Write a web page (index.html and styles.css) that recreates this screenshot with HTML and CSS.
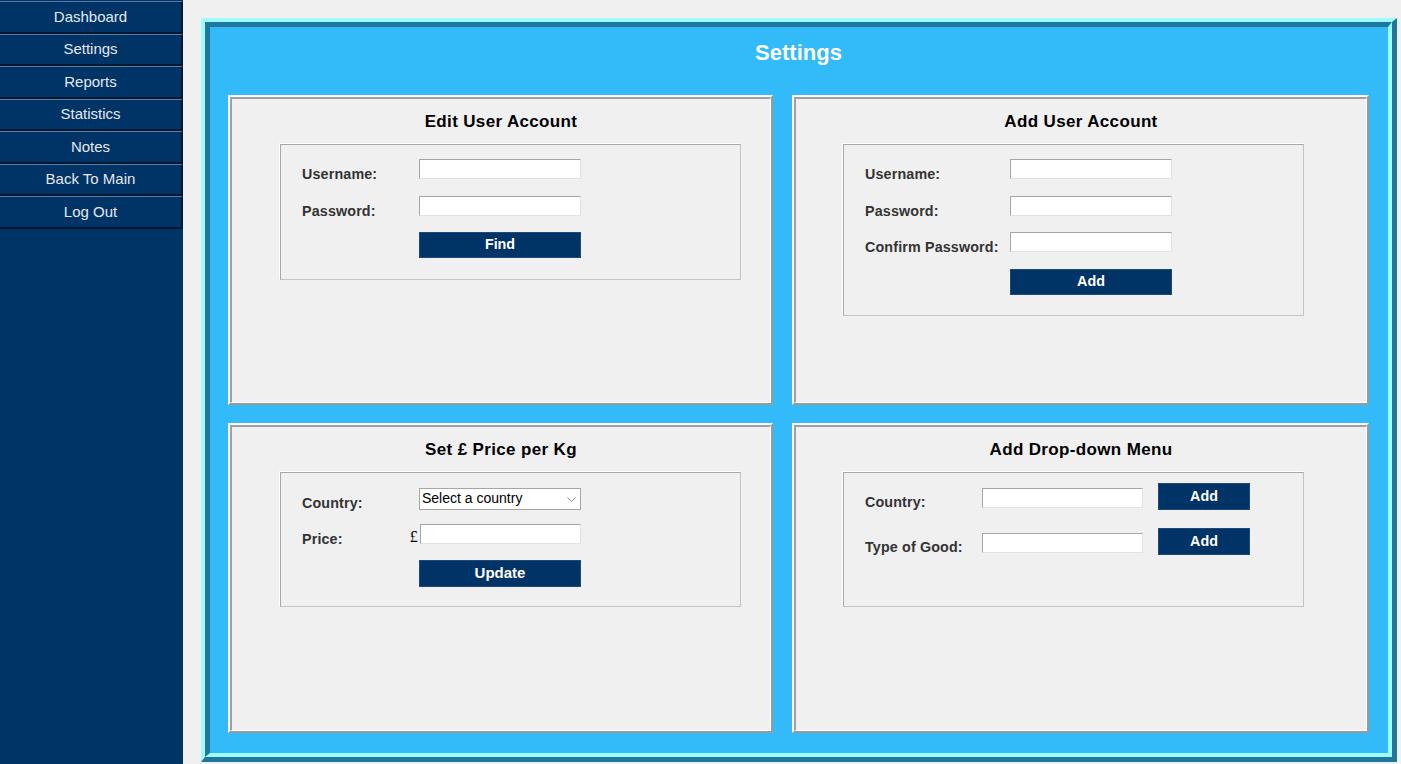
FILE: index.html
```html
<!DOCTYPE html>
<html lang="en">
<head>
<meta charset="utf-8">
<title>Settings</title>
<link rel="stylesheet" href="styles.css">
</head>
<body>
<nav class="sidebar">
  <div class="nav-btn">Dashboard</div>
  <div class="nav-btn">Settings</div>
  <div class="nav-btn">Reports</div>
  <div class="nav-btn">Statistics</div>
  <div class="nav-btn">Notes</div>
  <div class="nav-btn">Back To Main</div>
  <div class="nav-btn">Log Out</div>
</nav>
<main class="main">
  <div class="frame">
    <div class="frame-inner">
      <h1 class="page-title">Settings</h1>
      <div class="grid">
        <section class="card card-left">
          <div class="card-inner">
            <h2 class="card-title">Edit User Account</h2>
            <div class="box box-edit">
              <div class="form">
                <label class="lbl">Username:</label><input class="txt" type="text">
                <label class="lbl">Password:</label><input class="txt" type="password">
                <span></span><button class="btn">Find</button>
              </div>
            </div>
          </div>
        </section>
        <section class="card">
          <div class="card-inner">
            <h2 class="card-title">Add User Account</h2>
            <div class="box box-add">
              <div class="form form-wide">
                <label class="lbl">Username:</label><input class="txt" type="text">
                <label class="lbl">Password:</label><input class="txt" type="password">
                <label class="lbl">Confirm Password:</label><input class="txt" type="password">
                <span></span><button class="btn">Add</button>
              </div>
            </div>
          </div>
        </section>
        <section class="card card-left">
          <div class="card-inner">
            <h2 class="card-title">Set £ Price per Kg</h2>
            <div class="box box-price">
              <div class="form form-price">
                <label class="lbl">Country:</label>
                <div class="select-wrap">
                  <select class="sel"><option>Select a country</option></select>
                  <svg class="chev" width="9" height="6" viewBox="0 0 9 6"><polyline points="0.5,0.5 4.5,4.5 8.5,0.5" fill="none" stroke="#8a8a8a" stroke-width="1"/></svg>
                </div>
                <label class="lbl lbl-price"><span>Price:</span><span class="pound">£</span></label><input class="txt txt-price" type="text">
                <span></span><button class="btn btn-update">Update</button>
              </div>
            </div>
          </div>
        </section>
        <section class="card">
          <div class="card-inner">
            <h2 class="card-title">Add Drop-down Menu</h2>
            <div class="box box-drop">
              <div class="form-drop">
                <label class="lbl">Country:</label><input class="txt" type="text"><button class="btn btn-small">Add</button>
                <label class="lbl">Type of Good:</label><input class="txt" type="text"><button class="btn btn-small">Add</button>
              </div>
            </div>
          </div>
        </section>
      </div>
    </div>
  </div>
</main>
</body>
</html>
```
FILE: styles.css
```css
* { box-sizing: border-box; }
html, body { margin: 0; padding: 0; }
body {
  width: 1401px;
  height: 764px;
  overflow: hidden;
  display: flex;
  background: #f0f0f0;
  font-family: "Liberation Sans", Arial, sans-serif;
}
.sidebar {
  width: 183px;
  flex: none;
  background: #003366;
  padding-top: 1px;
  display: flex;
  flex-direction: column;
}
.nav-btn {
  height: 32.5px;
  border-top: 1px solid #5a7ca4;
  border-bottom: 2px solid #00182f;
  border-right: 2px solid #00182f;
  color: #e4e8ee;
  font-size: 15px;
  display: flex;
  align-items: center;
  justify-content: center;
  padding-bottom: 1px;
}
.main {
  flex: 1;
  padding: 18px 0 0 18px;
}
.frame {
  width: 1196px;
  height: 744px;
  border-style: solid;
  border-width: 4px 5px 5px 4px;
  border-color: #9efcff #20779e #20779e #9efcff;
}
.frame-inner {
  height: 100%;
  border-style: solid;
  border-width: 5px 4px 4px 5px;
  border-color: #20779e #9efcff #9efcff #20779e;
  background: #33baf8;
  padding: 0 19px 0 18px;
}
.page-title {
  margin: 0 0 18px 0;
  height: 50px;
  line-height: 52px;
  text-align: center;
  color: #ffffff;
  font-size: 22px;
  font-weight: bold;
}
.grid {
  display: grid;
  grid-template-columns: 545px 577px;
  grid-template-rows: 310px 310px;
  column-gap: 19px;
  row-gap: 18px;
}
.card {
  border-style: solid;
  border-width: 2px;
  border-color: #ffffff #9a9a9a #9a9a9a #ffffff;
  background: #f0f0f0;
}
.card-inner {
  height: 100%;
  border-style: solid;
  border-width: 2px 1px 1px 2px;
  border-color: #a0a0a0 #ffffff #ffffff #a0a0a0;
}
.card-title {
  margin: 13px 0 12px 0;
  height: 20px;
  line-height: 20px;
  text-align: center;
  font-size: 17px;
  font-weight: bold;
  letter-spacing: 0.35px;
  color: #000;
}
.box {
  width: 461px;
  margin-left: 47px;
  border-style: solid;
  border-width: 1px;
  border-color: #a8a8a8 #c4c4c4 #c4c4c4 #a8a8a8;
  box-shadow: -1px -1px 0 #ffffff;
  padding: 14px 0 0 21px;
}
.card-left .box { margin-left: 48px; }
.box-edit { height: 136px; }
.box-add { height: 172px; }
.box-price { height: 135px; padding-top: 15px; }
.box-drop { height: 135px; padding-top: 10px; }
.form {
  display: grid;
  grid-template-columns: 117px 162px;
  grid-auto-rows: 20px;
  row-gap: 16.5px;
  align-items: start;
}
.form-wide { grid-template-columns: 145px 162px; }
.form-price { row-gap: 16px; }
.lbl {
  font-size: 14.3px;
  font-weight: bold;
  color: #333333;
  line-height: 17px;
  padding-top: 7px;
  letter-spacing: 0.15px;
  white-space: nowrap;
}
.txt {
  display: block;
  width: 162px;
  height: 20px;
  margin: 0;
  padding: 0 3px;
  background: #ffffff;
  border-style: solid;
  border-width: 1px;
  border-color: #a6a6a6 #e2e2e2 #e2e2e2 #a6a6a6;
  font-family: "Liberation Sans", Arial, sans-serif;
  font-size: 14px;
  outline: none;
}
.btn {
  width: 162px;
  height: 26px;
  margin: 0;
  padding: 0 0 2px 0;
  border: 1px solid #1f4a78;
  background: #003366;
  color: #ffffff;
  font-family: "Liberation Sans", Arial, sans-serif;
  font-size: 14.3px;
  font-weight: bold;
}
.btn-update { height: 27px; font-size: 15px; }
.select-wrap {
  position: relative;
  width: 162px;
  height: 22px;
}
.sel {
  appearance: none;
  -webkit-appearance: none;
  width: 162px;
  height: 22px;
  margin: 0;
  padding: 0 0 2px 2px;
  background: #ffffff;
  border: 1px solid #a6a6a6;
  border-radius: 0;
  font-family: "Liberation Sans", Arial, sans-serif;
  font-size: 14px;
  color: #000;
}
.chev {
  position: absolute;
  right: 5px;
  top: 9px;
  pointer-events: none;
}
.lbl-price {
  display: flex;
  justify-content: space-between;
}
.pound {
  font-family: "Liberation Serif", "Times New Roman", serif;
  font-weight: normal;
  font-size: 16px;
  color: #000;
  margin-top: -3px;
  padding-right: 1px;
}
.txt-price { width: 161px; margin-left: 1px; }
.form-drop {
  display: grid;
  grid-template-columns: 117px 161px 92px;
  column-gap: 0;
  grid-auto-rows: 27px;
  row-gap: 18px;
  align-items: start;
}
.form-drop .lbl { padding-top: 11px; }
.form-drop .txt { width: 161px; margin-top: 5px; }
.btn-small {
  width: 92px;
  height: 27px;
  margin-left: 15px;
  font-size: 14.3px;
}
```
